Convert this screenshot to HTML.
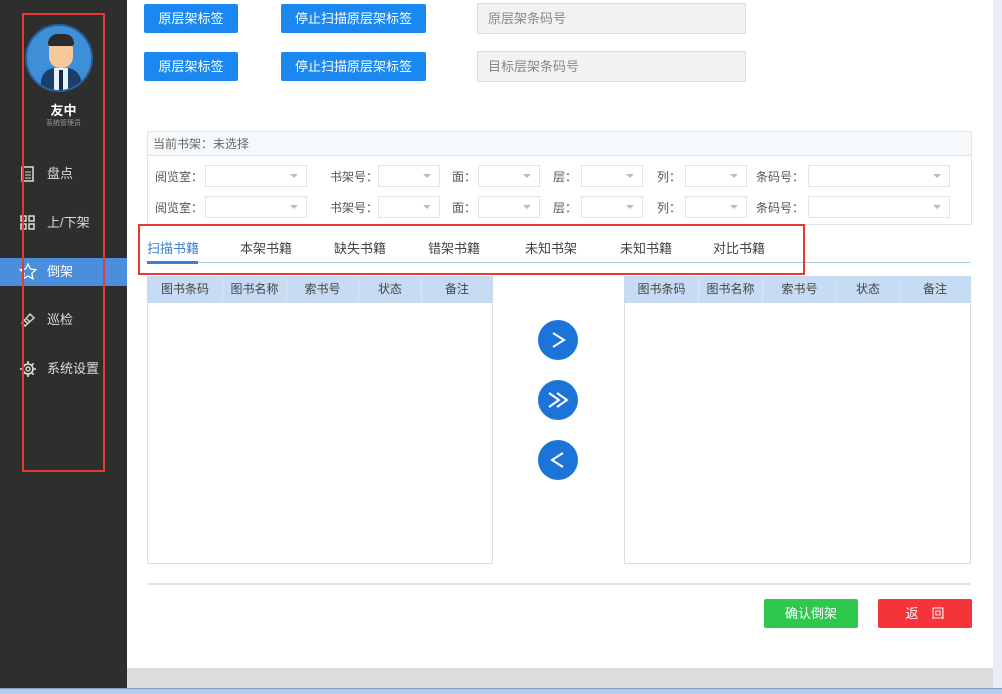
<!DOCTYPE html><html><head><meta charset="utf-8"><style>
*{box-sizing:border-box;margin:0;padding:0}
body{width:1002px;height:694px;position:relative;overflow:hidden;background:#fff;font-family:"Liberation Sans","Noto Sans CJK SC",sans-serif;font-size:13px;color:#333}
.a{position:absolute}
.side{left:0;top:0;width:127px;height:694px;background:#2e2e2e}
.nav{left:0;width:127px;height:28px;color:#ddd;font-size:13px;line-height:28px}
.nav span{position:absolute;left:47px}
.btn{background:#1a88f0;color:#fff;text-align:center;line-height:29px;font-size:13px;border-radius:2px}
.inp{background:#f2f2f2;border:1px solid #ddd;color:#888;padding-left:10px;line-height:29px;font-size:13px}
.lbl{font-size:12px;color:#555}
.sel{border:1px solid #e3e3e3;height:22px;background:#fff}
.sel:after{content:"";position:absolute;right:8px;top:8px;border:4px solid transparent;border-top:4px solid #bbb}
.th{background:#c6dcf4;height:27px;border:1px solid #c9d8e8}
.th div{position:absolute;top:0;height:26px;line-height:24px;text-align:center;font-size:12px;color:#444;border-right:1px solid #d9e5f2}
.cir{width:40px;height:40px;border-radius:50%;background:#1c74d8}
.tab{top:238px;font-size:13px;color:#444}
</style></head><body>
<div class="a side"></div>
<div class="a" style="left:25px;top:24px;width:68px;height:68px;border-radius:50%;background:#3f8fd8;border:2px solid #2a5e9a;overflow:hidden">
<div class="a" style="left:14px;top:42px;width:40px;height:30px;background:#1b3e6a;border-radius:14px 14px 0 0"></div>
<div class="a" style="left:27px;top:42px;width:14px;height:26px;background:#e8f0f8"></div>
<div class="a" style="left:32px;top:44px;width:4px;height:22px;background:#1a2a40"></div>
<div class="a" style="left:22px;top:12px;width:24px;height:30px;border-radius:11px;background:#f6c89a"></div>
<div class="a" style="left:21px;top:8px;width:26px;height:12px;border-radius:12px 12px 3px 3px;background:#2b2b2b"></div>
</div>
<div class="a" style="left:0;width:127px;top:100px;text-align:center;color:#fff;font-size:13px;font-weight:bold">友中</div>
<div class="a" style="left:0;width:127px;top:118px;text-align:center;color:#999;font-size:7px">系统管理员</div>
<div class="a nav" style="top:160px"><svg class="a" style="left:20px;top:5px" width="16" height="18"><rect x="2" y="2" width="11" height="14" fill="none" stroke="#ddd" stroke-width="1.5"/><path d="M5 7h6M5 10h6M5 13h6" stroke="#ddd"/></svg><span>盘点</span></div>
<div class="a nav" style="top:209px"><svg class="a" style="left:20px;top:6px" width="16" height="16"><rect x="1" y="1" width="5" height="5" fill="none" stroke="#ddd" stroke-width="1.5"/><rect x="9" y="1" width="5" height="5" fill="none" stroke="#ddd" stroke-width="1.5"/><rect x="1" y="9" width="5" height="5" fill="none" stroke="#ddd" stroke-width="1.5"/><rect x="9" y="9" width="5" height="5" fill="none" stroke="#ddd" stroke-width="1.5"/></svg><span>上/下架</span></div>
<div class="a nav" style="top:258px;background:#4a8fdc;color:#fff"><svg class="a" style="left:19px;top:5px" width="18" height="18"><path d="M9 1l2.4 5 5.4.6-4 3.7 1.1 5.4L9 13l-4.9 2.7 1.1-5.4-4-3.7 5.4-.6z" fill="none" stroke="#fff" stroke-width="1.3"/></svg><span>倒架</span></div>
<div class="a nav" style="top:306px"><svg class="a" style="left:19px;top:5px" width="18" height="18"><path d="M3 12l8-9 4 4-9 8z M6 10l3 3M8 8l3 3" fill="none" stroke="#ddd" stroke-width="1.4"/></svg><span>巡检</span></div>
<div class="a nav" style="top:355px"><svg class="a" style="left:19px;top:5px" width="18" height="18"><circle cx="9" cy="9" r="5" fill="none" stroke="#ddd" stroke-width="1.6"/><circle cx="9" cy="9" r="2" fill="none" stroke="#ddd" stroke-width="1.4"/><path d="M9 1v3M9 14v3M1 9h3M14 9h3M3.3 3.3l2 2M12.7 12.7l2 2M3.3 14.7l2-2M12.7 5.3l2-2" stroke="#ddd" stroke-width="1.6"/></svg><span>系统设置</span></div>
<div class="a" style="left:22px;top:13px;width:83px;height:459px;border:2px solid #e53935"></div>

<div class="a btn" style="left:144px;top:4px;width:94px;height:29px">原层架标签</div>
<div class="a btn" style="left:281px;top:4px;width:145px;height:29px">停止扫描原层架标签</div>
<div class="a inp" style="left:477px;top:3px;width:269px;height:31px">原层架条码号</div>
<div class="a btn" style="left:144px;top:52px;width:94px;height:29px">原层架标签</div>
<div class="a btn" style="left:281px;top:52px;width:145px;height:29px">停止扫描原层架标签</div>
<div class="a inp" style="left:477px;top:51px;width:269px;height:31px">目标层架条码号</div>

<div class="a" style="left:147px;top:131px;width:825px;height:94px;border:1px solid #dde6ee"></div>
<div class="a" style="left:148px;top:132px;width:823px;height:24px;background:#f5f9fc;border-bottom:1px solid #dde6ee;font-size:12px;color:#666;line-height:24px;padding-left:5px">当前书架：未选择</div>
<div class="a" style="left:0;top:165px;width:1000px;height:24px">
<div class="a lbl" style="left:155px;top:3px">阅览室：</div><div class="a sel" style="left:205px;top:0;width:102px"></div>
<div class="a lbl" style="left:330px;top:3px">书架号：</div><div class="a sel" style="left:378px;top:0;width:62px"></div>
<div class="a lbl" style="left:452px;top:3px">面：</div><div class="a sel" style="left:478px;top:0;width:62px"></div>
<div class="a lbl" style="left:553px;top:3px">层：</div><div class="a sel" style="left:581px;top:0;width:62px"></div>
<div class="a lbl" style="left:657px;top:3px">列：</div><div class="a sel" style="left:685px;top:0;width:62px"></div>
<div class="a lbl" style="left:756px;top:3px">条码号：</div><div class="a sel" style="left:808px;top:0;width:142px"></div>
</div>
<div class="a" style="left:0;top:196px;width:1000px;height:24px">
<div class="a lbl" style="left:155px;top:3px">阅览室：</div><div class="a sel" style="left:205px;top:0;width:102px"></div>
<div class="a lbl" style="left:330px;top:3px">书架号：</div><div class="a sel" style="left:378px;top:0;width:62px"></div>
<div class="a lbl" style="left:452px;top:3px">面：</div><div class="a sel" style="left:478px;top:0;width:62px"></div>
<div class="a lbl" style="left:553px;top:3px">层：</div><div class="a sel" style="left:581px;top:0;width:62px"></div>
<div class="a lbl" style="left:657px;top:3px">列：</div><div class="a sel" style="left:685px;top:0;width:62px"></div>
<div class="a lbl" style="left:756px;top:3px">条码号：</div><div class="a sel" style="left:808px;top:0;width:142px"></div>
</div>

<div class="a" style="left:147px;top:262px;width:823px;height:1px;background:#a9c8e8"></div>
<div class="a" style="left:147px;top:261px;width:51px;height:3px;background:#3a82d0"></div>
<div class="a tab" style="left:147px;color:#3a82d0">扫描书籍</div>
<div class="a tab" style="left:240px">本架书籍</div>
<div class="a tab" style="left:334px">缺失书籍</div>
<div class="a tab" style="left:428px">错架书籍</div>
<div class="a tab" style="left:525px">未知书架</div>
<div class="a tab" style="left:620px">未知书籍</div>
<div class="a tab" style="left:713px">对比书籍</div>
<div class="a" style="left:138px;top:224px;width:667px;height:51px;border:2px solid #e53935"></div>

<div class="a" style="left:147px;top:276px;width:346px;height:288px;border:1px solid #d6dde6"></div>
<div class="a th" style="left:147px;top:276px;width:346px"><div style="left:0;width:75px">图书条码</div><div style="left:75px;width:64px">图书名称</div><div style="left:139px;width:72px">索书号</div><div style="left:211px;width:63px">状态</div><div style="left:274px;width:70px;border:0">备注</div></div>
<div class="a" style="left:624px;top:276px;width:347px;height:288px;border:1px solid #d6dde6"></div>
<div class="a th" style="left:624px;top:276px;width:347px"><div style="left:0;width:74px">图书条码</div><div style="left:74px;width:64px">图书名称</div><div style="left:138px;width:74px">索书号</div><div style="left:212px;width:63px">状态</div><div style="left:275px;width:70px;border:0">备注</div></div>

<div class="a cir" style="left:538px;top:320px"><svg width="40" height="40"><path d="M15 13l11 7-11 7" fill="none" stroke="#fff" stroke-width="2"/></svg></div>
<div class="a cir" style="left:538px;top:380px"><svg width="40" height="40"><path d="M11 13l10 7-10 7M19 13l10 7-10 7" fill="none" stroke="#fff" stroke-width="2"/></svg></div>
<div class="a cir" style="left:538px;top:440px"><svg width="40" height="40"><path d="M25 13l-11 7 11 7" fill="none" stroke="#fff" stroke-width="2"/></svg></div>

<div class="a" style="left:147px;top:583px;width:823px;height:2px;background:#e2e2e2"></div>
<div class="a btn" style="left:764px;top:599px;width:94px;height:29px;background:#2fc84f">确认倒架</div>
<div class="a btn" style="left:878px;top:599px;width:94px;height:29px;background:#f5333a">返　回</div>

<div class="a" style="left:127px;top:668px;width:866px;height:20px;background:#dcdcdc"></div>
<div class="a" style="left:993px;top:0;width:9px;height:694px;background:#e9eff8"></div>
<div class="a" style="left:0;top:688px;width:1002px;height:6px;background:#b6cce6;border-top:1px solid #7f9fc8"></div>
</body></html>
